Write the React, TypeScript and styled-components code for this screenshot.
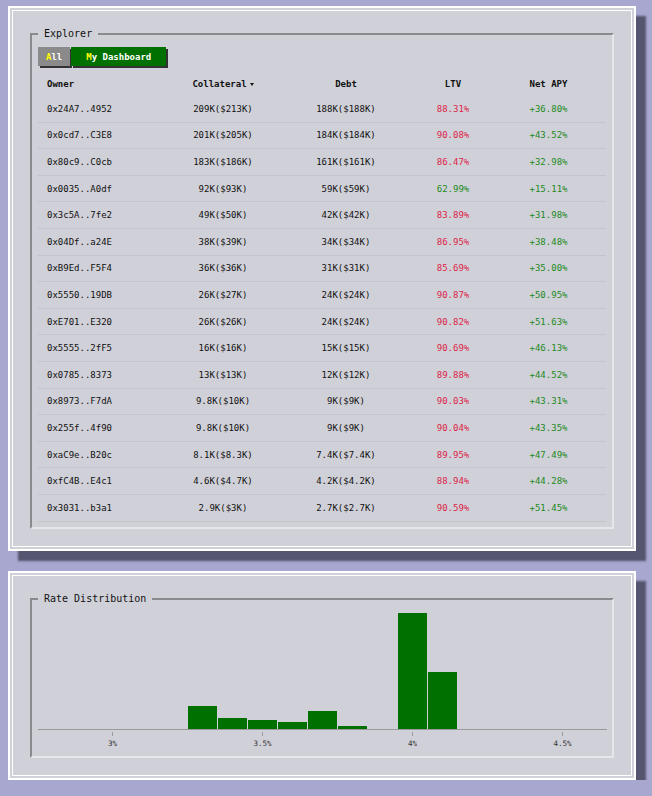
import React from 'react';
import styled, { createGlobalStyle } from 'styled-components';

const GlobalStyle = createGlobalStyle`
  html, body {
    margin: 0;
    background: #a7a7cf;
  }

  body {
    padding: 6px 0 0 8px;
    font-family: "DejaVu Sans Mono", monospace;
    color: #111;
  }
`;

const Page = styled.div`
  display: flex;
  flex-direction: column;
  gap: 20px;
  width: 628px;
`;

const Window = styled.section`
  background: #d0d0d8;
  border: 2px solid #fff;
  padding: 20px;
  box-shadow:
    inset 0 0 0 2px #d0d0d8,
    inset 0 0 0 3px #fff,
    10px 10px 2px #555570;
`;

const Frame = styled.fieldset`
  margin: 0;
  min-width: 0;
  padding: 7px 6px 5px;
  border: 2px solid;
  border-color: #8a8a8e #e6e6ea #e6e6ea #8a8a8e;
`;

const Legend = styled.legend`
  padding: 0 6px;
  font-size: 10px;
  line-height: 12px;
  color: #111;
`;

const TabBar = styled.div`
  display: flex;
  gap: 1px;
  margin-bottom: 6px;
`;

const Tab = styled.button<{ $active?: boolean }>`
  height: 19px;
  padding: 0 ${p => p.$active ? '15px' : '8px'};
  border: 0;
  background: ${p => p.$active ? '#007000' : '#8a8a8a'};
  color: #fff;
  font-family: inherit;
  font-size: 9px;
  font-weight: bold;
  box-shadow: 2px 2px 0 #333;
  cursor: pointer;
`;

const Hotkey = styled.span`
  color: #ffff00;
`;

const cols = '132px 106px 140px 74px 117px';

const HeadRow = styled.div`
  display: grid;
  grid-template-columns: ${cols};
  height: 24px;
  align-items: center;
  font-size: 9px;
  font-weight: bold;
`;

const Row = styled.div`
  display: grid;
  grid-template-columns: ${cols};
  height: 26.6px;
  box-sizing: border-box;
  align-items: center;
  border-bottom: 1px solid #c4c4cc;
  font-size: 9px;
`;

const Cell = styled.div<{ $left?: boolean; $tone?: 'good' | 'bad' }>`
  text-align: ${p => p.$left ? 'left' : 'center'};
  padding-left: ${p => p.$left ? '9px' : '0'};
  white-space: nowrap;
  color: ${p => p.$tone === 'good' ? '#1c8a1c' : p.$tone === 'bad' ? '#dc2448' : '#111'};
`;

const Sorted = styled.span`
  &::after {
    content: '';
    display: inline-block;
    margin-left: 3px;
    vertical-align: middle;
    border-left: 2.5px solid transparent;
    border-right: 2.5px solid transparent;
    border-top: 3px solid #111;
  }
`;

const Chart = styled.svg`
  display: block;
`;

type Position = [string, string, string, number, number];

const positions: Position[] = [
  ['0x24A7..4952', '209K($213K)', '188K($188K)', 88.31, 36.80],
  ['0x0cd7..C3E8', '201K($205K)', '184K($184K)', 90.08, 43.52],
  ['0x80c9..C0cb', '183K($186K)', '161K($161K)', 86.47, 32.98],
  ['0x0035..A0df', '92K($93K)', '59K($59K)', 62.99, 15.11],
  ['0x3c5A..7fe2', '49K($50K)', '42K($42K)', 83.89, 31.98],
  ['0x04Df..a24E', '38K($39K)', '34K($34K)', 86.95, 38.48],
  ['0xB9Ed..F5F4', '36K($36K)', '31K($31K)', 85.69, 35.00],
  ['0x5550..19DB', '26K($27K)', '24K($24K)', 90.87, 50.95],
  ['0xE701..E320', '26K($26K)', '24K($24K)', 90.82, 51.63],
  ['0x5555..2fF5', '16K($16K)', '15K($15K)', 90.69, 46.13],
  ['0x0785..8373', '13K($13K)', '12K($12K)', 89.88, 44.52],
  ['0x8973..F7dA', '9.8K($10K)', '9K($9K)', 90.03, 43.31],
  ['0x255f..4f90', '9.8K($10K)', '9K($9K)', 90.04, 43.35],
  ['0xaC9e..B20c', '8.1K($8.3K)', '7.4K($7.4K)', 89.95, 47.49],
  ['0xfC4B..E4c1', '4.6K($4.7K)', '4.2K($4.2K)', 88.94, 44.28],
  ['0x3031..b3a1', '2.9K($3K)', '2.7K($2.7K)', 90.59, 51.45],
];

// histogram bins, 0.1% wide, starting at 3.25%
const bins = [23, 11, 9, 7, 18, 3, 0, 116, 57];

const W = 569;
const H = 139;
const BASE = 117;
const PX_PER_PCT = 300;
const ORIGIN = 74 - 3 * PX_PER_PCT; // x of 0%
const ticks = [3, 3.5, 4, 4.5];

const RateChart = () => (
  <Chart width={W} height={H}>
    {bins.map((h, i) => h > 0 && (
      <rect
        key={i}
        x={ORIGIN + (3.25 + i * 0.1) * PX_PER_PCT + 1}
        y={BASE - h}
        width={29}
        height={h}
        fill="#007000"
      />
    ))}
    <line x1={0} x2={W} y1={BASE + 0.5} y2={BASE + 0.5} stroke="#999" />
    {ticks.map(t => {
      const x = ORIGIN + t * PX_PER_PCT + 0.5;
      return (
        <g key={t}>
          <line x1={x} x2={x} y1={120} y2={124} stroke="#999" />
          <text
            x={x}
            y={132}
            fontSize="7.5"
            fill="#333"
            textAnchor="middle"
            dominantBaseline="middle"
            fontFamily="DejaVu Sans Mono, monospace"
          >
            {t}%
          </text>
        </g>
      );
    })}
  </Chart>
);

export default () => {
  return (
    <>
      <GlobalStyle />
      <Page>
        <Window>
          <Frame>
            <Legend>Explorer</Legend>

            <TabBar>
              <Tab><Hotkey>A</Hotkey>ll</Tab>
              <Tab $active><Hotkey>M</Hotkey>y Dashboard</Tab>
            </TabBar>

            <HeadRow>
              <Cell $left>Owner</Cell>
              <Cell><Sorted>Collateral</Sorted></Cell>
              <Cell>Debt</Cell>
              <Cell>LTV</Cell>
              <Cell>Net APY</Cell>
            </HeadRow>

            {positions.map(([owner, coll, debt, ltv, apy]) => (
              <Row key={owner}>
                <Cell $left>{owner}</Cell>
                <Cell>{coll}</Cell>
                <Cell>{debt}</Cell>
                <Cell $tone={ltv < 80 ? 'good' : 'bad'}>{ltv.toFixed(2)}%</Cell>
                <Cell $tone="good">+{apy.toFixed(2)}%</Cell>
              </Row>
            ))}
          </Frame>
        </Window>

        <Window>
          <Frame>
            <Legend>Rate Distribution</Legend>
            <RateChart />
          </Frame>
        </Window>
      </Page>
    </>
  );
}
